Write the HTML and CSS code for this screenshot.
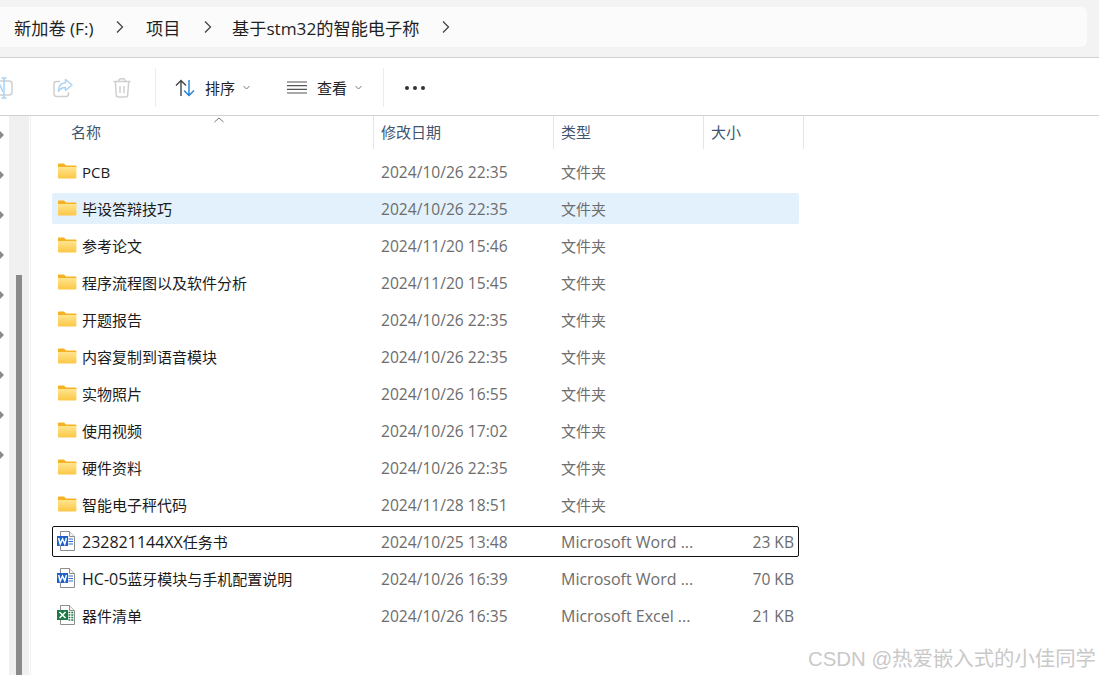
FILE: index.html
```html
<!DOCTYPE html>
<html lang="zh-CN">
<head>
<meta charset="utf-8">
<title>基于stm32的智能电子称</title>
<link rel="stylesheet" href="styles.css">
</head>
<body>
<svg class="defs" width="0" height="0" aria-hidden="true">
  <defs>
    <linearGradient id="fg" x1="0" y1="0" x2="0" y2="1"><stop offset="0" stop-color="#ffe58f"/><stop offset="1" stop-color="#fcc746"/></linearGradient>
    <symbol id="folder" viewBox="0 0 20 16">
      <path d="M1 3V1.600C1 1 1.400.6 2 .6h5l2 2h9.500c.5 0 .9.4.9.9V5H1z" fill="#f5b324"/>
      <path d="M1 4h18.400v10.500c0 .5-.4.9-.9.9H1.900c-.5 0-.9-.4-.9-.9V4z" fill="url(#fg)"/>
    </symbol>
    <symbol id="word" viewBox="0 0 18 20">
      <path d="M3.500.5h9l5 5v14h-14z" fill="#fff" stroke="#8d8d8d"/>
      <path d="M12.500.5v5h5" fill="#f2f2f2" stroke="#8d8d8d"/>
      <path d="M11.500 8h4.500M11.500 10.500h4.500M11.500 13h4.500" stroke="#2b6fd0" stroke-width="1.200"/>
      <rect x="0" y="5" width="11" height="10" fill="#1f5fc8"/>
      <path d="M1.600 7l1.600 6 2.300-5 2.300 5 1.600-6" fill="none" stroke="#fff" stroke-width="1.500"/>
    </symbol>
    <symbol id="excel" viewBox="0 0 18 20">
      <path d="M3.500.5h9l5 5v14h-14z" fill="#fff" stroke="#8d8d8d"/>
      <path d="M12.500.5v5h5" fill="#f2f2f2" stroke="#8d8d8d"/>
      <path d="M11.500 7.500h1.800M14.300 7.500h2M11.500 10h1.800M14.300 10h2M11.500 12.500h1.800M14.300 12.500h2M11.500 15h1.800M14.300 15h2" stroke="#1e7a45" stroke-width="1.400"/>
      <rect x="0" y="5" width="11" height="10" fill="#1e7a45"/>
      <path d="M2.500 7l6 6M8.500 7l-6 6" fill="none" stroke="#fff" stroke-width="1.500"/>
    </symbol>
  </defs>
</svg>

<header class="address">
  <nav class="crumbs">
    <span class="crumb crumb-drive">新加卷 (F:)</span>
    <svg class="chev" width="8" height="14" viewBox="0 0 8 14"><path d="M1 1.500l5.500 5.500L1 12.500"/></svg>
    <span class="crumb crumb-project">项目</span>
    <svg class="chev" width="8" height="14" viewBox="0 0 8 14"><path d="M1 1.500l5.500 5.500L1 12.500"/></svg>
    <span class="crumb crumb-folder">基于stm32的智能电子称</span>
    <svg class="chev" width="8" height="14" viewBox="0 0 8 14"><path d="M1 1.500l5.500 5.500L1 12.500"/></svg>
  </nav>
</header>

<div class="toolbar">
  <svg class="tool tool-rename" width="24" height="22" viewBox="0 0 24 22" fill="none">
    <rect x="2" y="4" width="20" height="14" rx="3" stroke="#cfcfcf" stroke-width="1.500"/>
    <path d="M6 15l3.500-8 3.500 8" stroke="#a9d3f5" stroke-width="1.500"/>
    <path d="M14 1v20M11.500 1h5M11.500 21h5" stroke="#a9d3f5" stroke-width="1.500"/>
  </svg>
  <svg class="tool tool-share" width="20" height="20" viewBox="0 0 20 20" fill="none">
    <path d="M7 3.500H3.500a2.500 2.500 0 0 0-2.500 2.500v10a2.500 2.500 0 0 0 2.500 2.500h9.500a2.500 2.500 0 0 0 2.500-2.500v-2" stroke="#cfcfcf" stroke-width="1.500"/>
    <path d="M12.500 1.500l6.500 5.500-6.500 5.500V9.500c-3 0-5.500 1-7 4 0-5 2.500-8.500 7-8.700z" stroke="#a9d3f5" stroke-width="1.400" stroke-linejoin="round"/>
  </svg>
  <svg class="tool tool-trash" width="18" height="20" viewBox="0 0 18 20" fill="none" stroke="#cfcfcf" stroke-width="1.500">
    <path d="M.5 3.500h17M6 3.500V2.500a1.700 1.700 0 0 1 1.700-1.700h2.600A1.700 1.700 0 0 1 12 2.500v1M2.300 3.500l1 13.500a2 2 0 0 0 2 2h7.400a2 2 0 0 0 2-2l1-13.500M7 8v7M11 8v7"/>
  </svg>
  <span class="sep sep-a"></span>
  <svg class="tool tool-sort" width="20" height="18" viewBox="0 0 20 18" fill="none" stroke-width="1.400">
    <path d="M6 17V1.500M1 6.500l5-5 5 5" stroke="#444"/>
    <path d="M14 1v15.500M9 11.500l5 5 5-5" stroke="#1f7fd6"/>
  </svg>
  <span class="tool-label label-sort">排序</span>
  <svg class="drop" width="7" height="5" viewBox="0 0 7 5"><path d="M.5 1l3 3 3-3"/></svg>
  <svg class="tool tool-view" width="20" height="13" viewBox="0 0 20 13" fill="none" stroke="#555" stroke-width="1.200">
    <path d="M0 1h20M0 4.700h20M0 8.300h20M0 12h20"/>
  </svg>
  <span class="tool-label label-view">查看</span>
  <svg class="drop" width="7" height="5" viewBox="0 0 7 5"><path d="M.5 1l3 3 3-3"/></svg>
  <span class="sep sep-b"></span>
  <div class="more"><i></i><i></i><i></i></div>
</div>

<main class="body">
  <aside class="tree">
    <div class="arrows">
      <i></i><i></i><i></i><i></i><i></i><i></i><i></i><i></i><i></i>
    </div>
    <div class="track"><div class="thumb"></div></div>
  </aside>
  <section class="files">
    <div class="head">
      <div class="hcell h-name">名称<svg class="caret" width="10" height="6" viewBox="0 0 10 6"><path d="M.5 5L5 1l4.500 4"/></svg></div>
      <div class="hcell h-date">修改日期</div>
      <div class="hcell h-type">类型</div>
      <div class="hcell h-size">大小</div>
    </div>
    <div class="rows">
      <div class="row"><div class="c-name"><svg class="ico"><use href="#folder"/></svg>PCB</div><div class="c-date">2024/10/26 22:35</div><div class="c-type">文件夹</div><div class="c-size"></div></div>
      <div class="row is-hover"><div class="c-name"><svg class="ico"><use href="#folder"/></svg>毕设答辩技巧</div><div class="c-date">2024/10/26 22:35</div><div class="c-type">文件夹</div><div class="c-size"></div></div>
      <div class="row"><div class="c-name"><svg class="ico"><use href="#folder"/></svg>参考论文</div><div class="c-date">2024/11/20 15:46</div><div class="c-type">文件夹</div><div class="c-size"></div></div>
      <div class="row"><div class="c-name"><svg class="ico"><use href="#folder"/></svg>程序流程图以及软件分析</div><div class="c-date">2024/11/20 15:45</div><div class="c-type">文件夹</div><div class="c-size"></div></div>
      <div class="row"><div class="c-name"><svg class="ico"><use href="#folder"/></svg>开题报告</div><div class="c-date">2024/10/26 22:35</div><div class="c-type">文件夹</div><div class="c-size"></div></div>
      <div class="row"><div class="c-name"><svg class="ico"><use href="#folder"/></svg>内容复制到语音模块</div><div class="c-date">2024/10/26 22:35</div><div class="c-type">文件夹</div><div class="c-size"></div></div>
      <div class="row"><div class="c-name"><svg class="ico"><use href="#folder"/></svg>实物照片</div><div class="c-date">2024/10/26 16:55</div><div class="c-type">文件夹</div><div class="c-size"></div></div>
      <div class="row"><div class="c-name"><svg class="ico"><use href="#folder"/></svg>使用视频</div><div class="c-date">2024/10/26 17:02</div><div class="c-type">文件夹</div><div class="c-size"></div></div>
      <div class="row"><div class="c-name"><svg class="ico"><use href="#folder"/></svg>硬件资料</div><div class="c-date">2024/10/26 22:35</div><div class="c-type">文件夹</div><div class="c-size"></div></div>
      <div class="row"><div class="c-name"><svg class="ico"><use href="#folder"/></svg>智能电子秤代码</div><div class="c-date">2024/11/28 18:51</div><div class="c-type">文件夹</div><div class="c-size"></div></div>
      <div class="row is-focus"><div class="c-name"><svg class="ico doc"><use href="#word"/></svg><span class="lat">232821144XX</span>任务书</div><div class="c-date">2024/10/25 13:48</div><div class="c-type lat">Microsoft Word ...</div><div class="c-size">23 KB</div></div>
      <div class="row"><div class="c-name"><svg class="ico doc"><use href="#word"/></svg><span class="lat">HC-05</span>蓝牙模块与手机配置说明</div><div class="c-date">2024/10/26 16:39</div><div class="c-type lat">Microsoft Word ...</div><div class="c-size">70 KB</div></div>
      <div class="row"><div class="c-name"><svg class="ico doc"><use href="#excel"/></svg>器件清单</div><div class="c-date">2024/10/26 16:35</div><div class="c-type lat">Microsoft Excel ...</div><div class="c-size">21 KB</div></div>
    </div>
  </section>
</main>
<div class="watermark">CSDN @热爱嵌入式的小佳同学</div>
</body>
</html>
```
FILE: styles.css
```css
* { box-sizing: border-box; }
html, body { margin: 0; padding: 0; }
body {
  width: 1099px;
  height: 675px;
  overflow: hidden;
  position: relative;
  background: #fff;
  font-family: "Open Sans", "Noto Sans CJK SC", sans-serif;
  font-size: 15px;
  color: #1b1b1b;
}
.defs { position: absolute; }

/* address bar */
.address {
  height: 58px;
  padding: 7px 12px 10px 0;
  background: #f3f3f3;
  border-bottom: 1px solid #d0d0d0;
}
.crumbs {
  height: 40px;
  display: flex;
  align-items: center;
  background: #fbfbfb;
  border-radius: 0 6px 6px 0;
  font-size: 17.2px;
  color: #1f1f1f;
}
.crumb { flex: none; white-space: nowrap; }
.crumb-drive { margin-left: 14px; width: 102px; }
.crumb-project { margin-left: 22px; width: 58px; }
.crumb-folder { margin-left: 20px; width: 210px; }
.chev { flex: none; }
.chev path { fill: none; stroke: #444; stroke-width: 1.3; }

/* toolbar */
.toolbar {
  height: 58px;
  display: flex;
  align-items: center;
  overflow: hidden;
  border-bottom: 1px solid #d0d0d0;
  padding-top: 2px;
}
.tool { flex: none; }
.tool-rename { margin-left: -10px; }
.tool-share { margin-left: 39px; }
.tool-trash { margin-left: 40px; }
.sep { flex: none; width: 1px; height: 39px; background: #ececec; }
.sep-a { margin-left: 24px; }
.tool-sort { margin-left: 19px; }
.tool-label { flex: none; font-size: 15px; color: #222; width: 30px; line-height: 20px; }
.label-sort { margin-left: 10px; }
.drop { flex: none; margin-left: 8px; }
.drop path { fill: none; stroke: #777; stroke-width: 1; }
.tool-view { margin-left: 37px; }
.label-view { margin-left: 10px; }
.sep-b { margin-left: 21px; }
.more { display: flex; gap: 4px; margin-left: 21px; }
.more i { width: 4px; height: 4px; border-radius: 50%; background: #333; }

/* body */
.body { display: flex; height: 559px; }
.tree { flex: none; width: 31px; display: flex; border-right: 1px solid #f0f0f0; }
.arrows { flex: none; width: 9px; display: flex; flex-direction: column; gap: 30px; padding-top: 14px; }
.arrows i {
  display: block;
  width: 0; height: 0;
  margin-left: -1px;
  border-left: 5px solid #8a8a8a;
  border-top: 5px solid transparent;
  border-bottom: 5px solid transparent;
}
.track { flex: none; width: 20px; background: #f0f0f0; padding: 159px 7px 0; }
.thumb { width: 6px; height: 400px; background: #8a8a8a; }

.files { flex: none; width: 780px; padding-left: 21px; }
.head { display: flex; height: 33px; font-size: 15px; color: #3f5570; }
.hcell { position: relative; height: 33px; line-height: 33px; padding-left: 7px; border-right: 1px solid #e5e5e5; flex: none; }
.h-name { width: 322px; padding-left: 19px; }
.h-date { width: 180px; }
.h-type { width: 150px; }
.h-size { width: 100px; }
.caret { position: absolute; left: 162px; top: 1px; }
.caret path { fill: none; stroke: #777; stroke-width: 1; }

.rows { display: flex; flex-direction: column; gap: 6px; width: 747px; padding-top: 7px; }
.row {
  display: flex;
  align-items: center;
  height: 31px;
  border: 1px solid transparent;
  border-radius: 2px;
}
.row.is-hover { background: #e3f1fc; border-color: #e3f1fc; }
.row.is-focus { border-color: #111; }
.c-name { flex: none; width: 321px; display: flex; align-items: center; color: #1b1b1b; white-space: nowrap; }
.c-name .lat { font-size: 16px; }
.ico { flex: none; width: 20px; height: 16px; margin: 0 5px 0 4px; position: relative; top: -1px; }
.ico.doc { height: 20px; width: 18px; margin-right: 7px; top: -1px; }
.c-date { flex: none; width: 180px; padding-left: 7px; color: #6d6d6d; font-size: 15.6px; white-space: nowrap; }
.c-type { flex: none; width: 150px; padding-left: 7px; color: #6d6d6d; white-space: nowrap; }
.c-type.lat { font-size: 16px; }
.c-size { flex: 1; text-align: right; padding-right: 4px; color: #6d6d6d; font-size: 15.6px; white-space: nowrap; }

.watermark {
  position: absolute;
  right: 3px;
  bottom: 3px;
  font-family: "Liberation Sans", "Noto Sans CJK SC", sans-serif;
  font-size: 20.4px;
  line-height: 26px;
  color: #c9c9c9;
  white-space: nowrap;
}
```
